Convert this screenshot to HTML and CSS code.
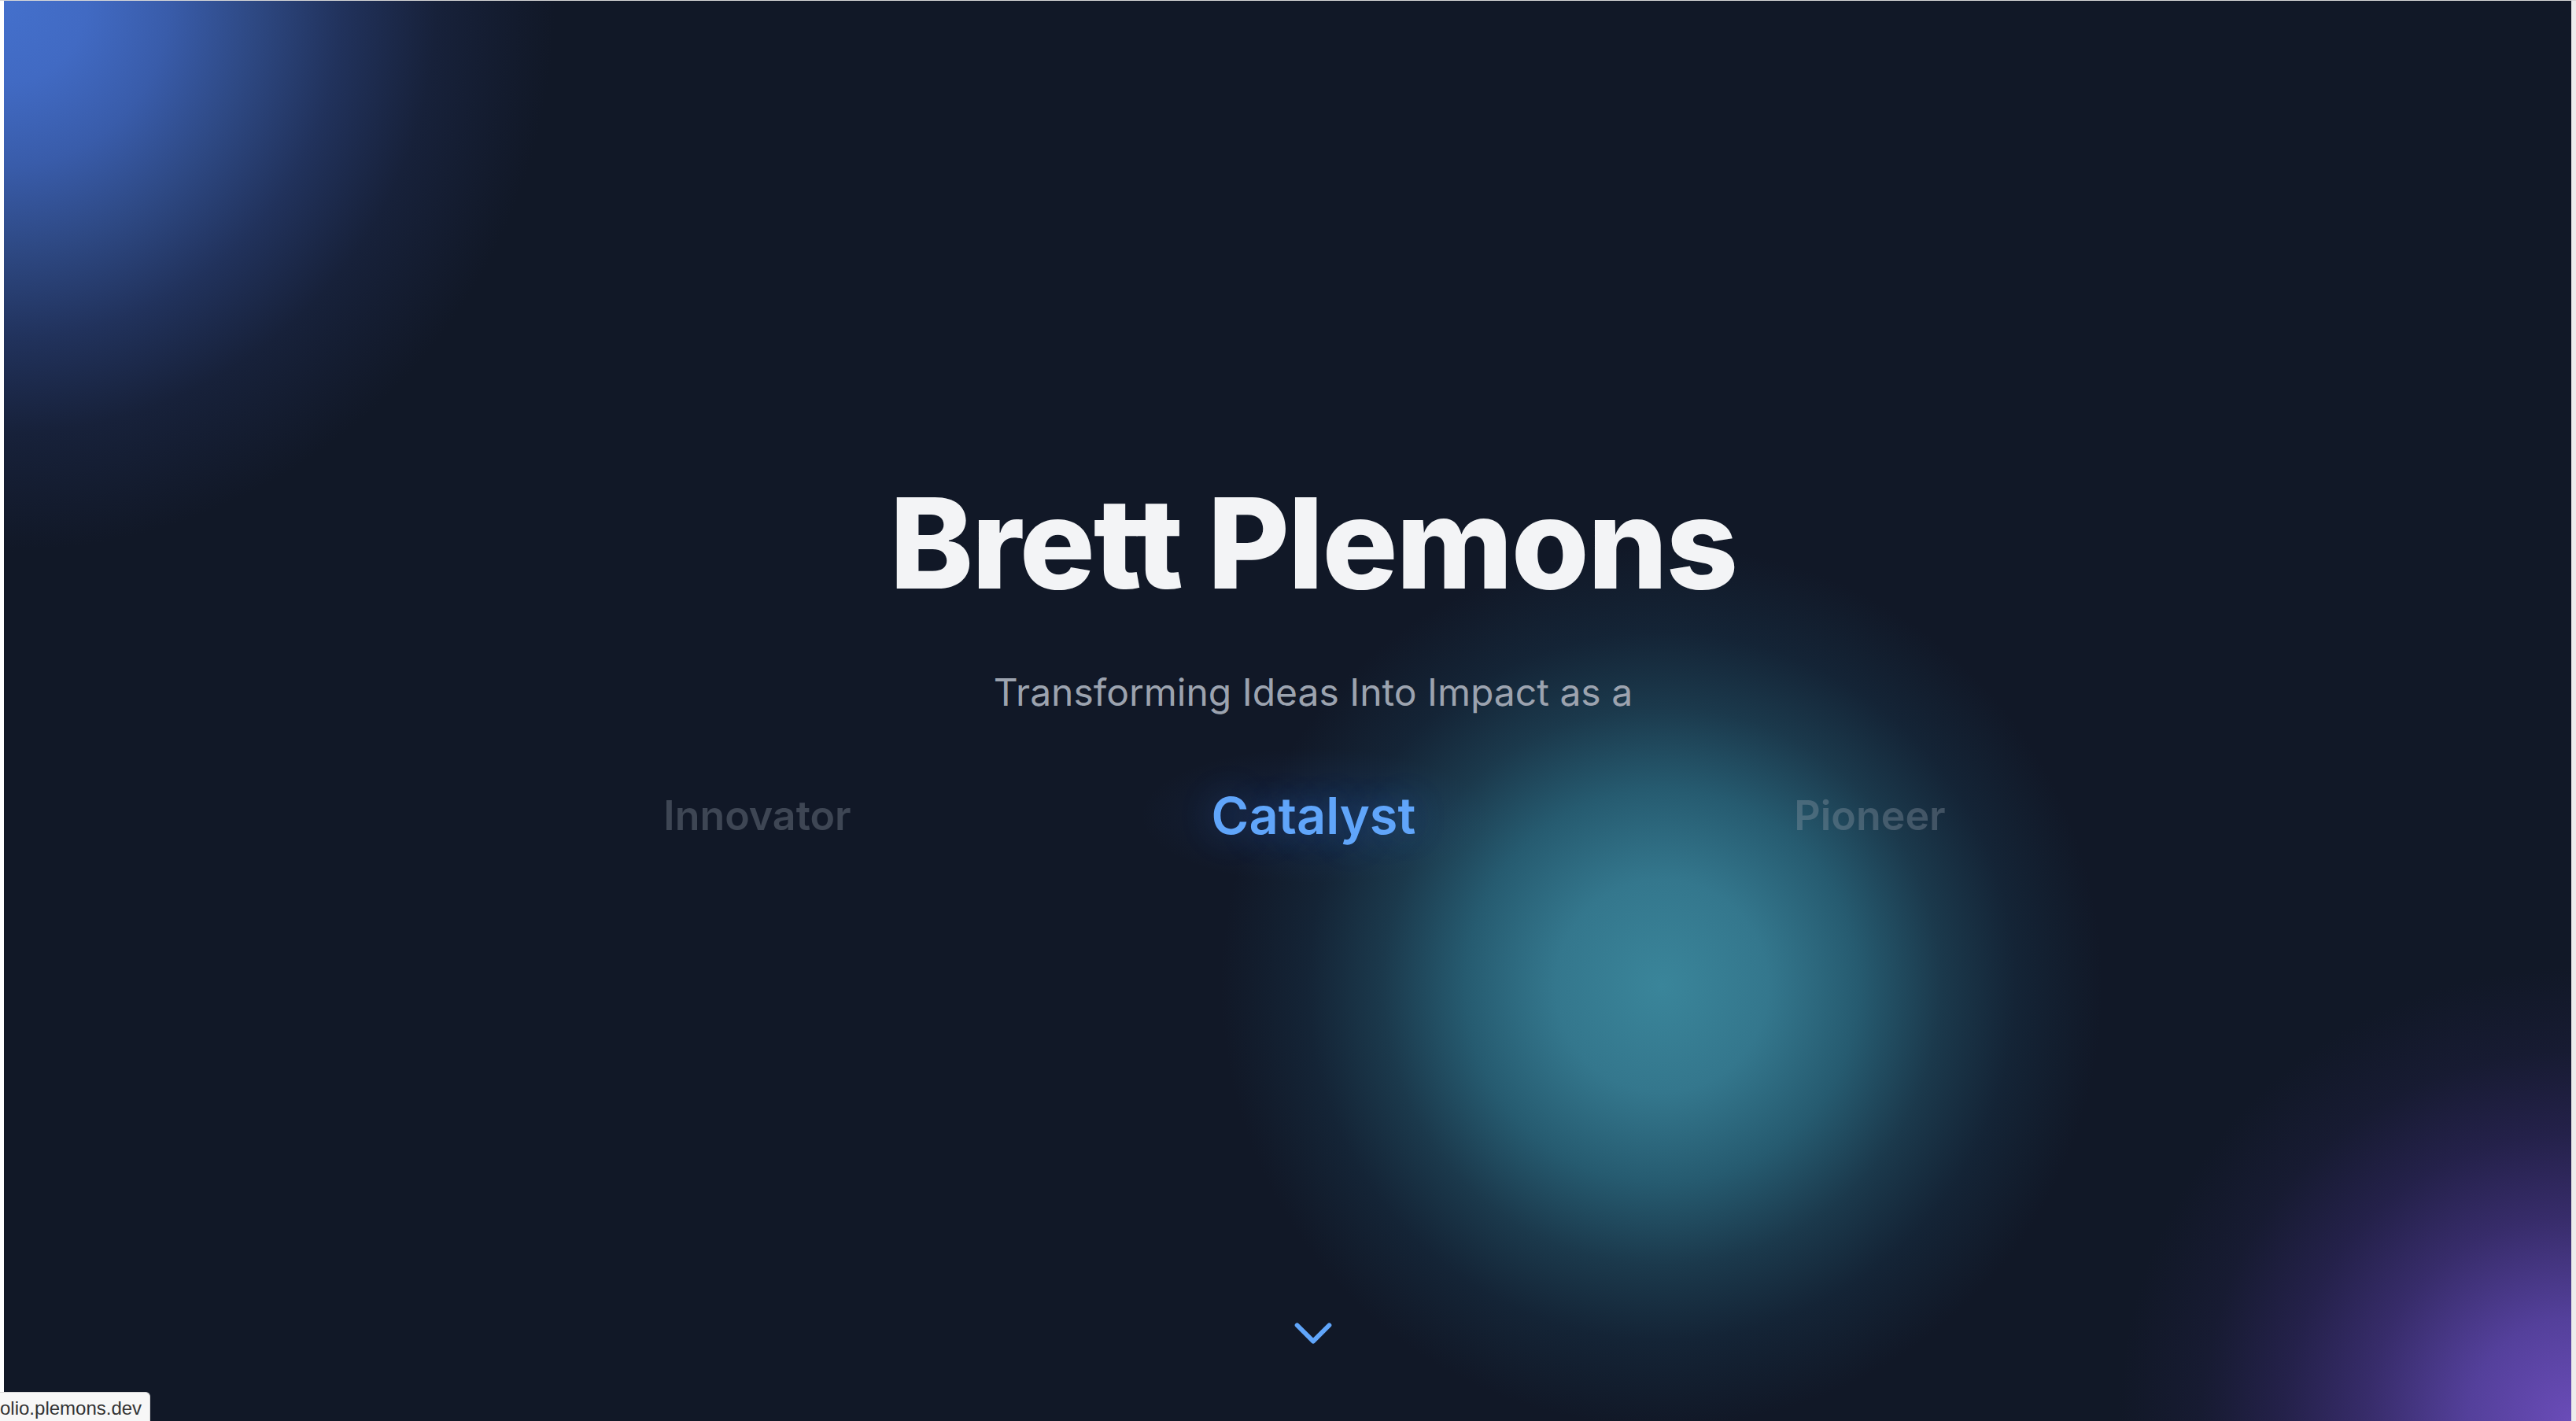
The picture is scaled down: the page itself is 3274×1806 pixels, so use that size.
FILE: index.html
```html
<!DOCTYPE html>
<html lang="en">
<head>
<meta charset="utf-8">
<title>Brett Plemons</title>
<link rel="stylesheet" href="styles.css">
</head>
<body>
<div class="frame">
  <section class="hero">
    <h1 class="hero-title">Brett Plemons</h1>
    <p class="hero-sub">Transforming Ideas Into Impact as a</p>
    <div class="roles">
      <span class="role role-side">Innovator</span>
      <span class="role role-active">Catalyst</span>
      <span class="role role-side">Pioneer</span>
    </div>
    <div class="scroll-cue">
      <svg class="chevron" viewBox="0 0 24 24" fill="none" stroke="currentColor" stroke-width="2" stroke-linecap="round" stroke-linejoin="round"><path d="M19 9l-7 7-7-7"/></svg>
    </div>
  </section>
</div>
<div class="status">olio.plemons.dev</div>
</body>
</html>
```
FILE: styles.css
```css
html, body {
  margin: 0;
  padding: 0;
  height: 100%;
  background: #ffffff;
  overflow: hidden;
}

.frame {
  height: 1806px;
  box-sizing: border-box;
  border-top: 1px solid #d8d8d8;
  padding-left: 5px;
  padding-right: 6px;
  background: linear-gradient(to right, #ffffff 0 5px, #ececec 5px);
}

.hero {
  height: 1805px;
  box-sizing: border-box;
  padding: 609px 0 78px 65px;
  display: flex;
  flex-direction: column;
  align-items: center;
  font-family: Inter, "Noto Sans", sans-serif;
  background-color: #111827;
  background-image:
    radial-gradient(circle 700px at 0 0,
      rgb(68,112,204) 0px,
      rgb(65,106,195) 105px,
      rgb(57,92,170) 210px,
      rgb(46,73,132) 315px,
      rgb(33,50,92) 430px,
      rgb(23,33,58) 550px,
      rgba(17,24,39,0) 700px),
    radial-gradient(circle 575px at 100% 100%,
      rgb(106,76,184) 0px,
      rgb(84,64,155) 130px,
      rgb(55,44,106) 260px,
      rgb(36,33,74) 365px,
      rgb(23,27,50) 470px,
      rgba(17,24,39,0) 575px),
    radial-gradient(circle 560px at 2107px 1252px,
      rgb(58,133,154) 0px,
      rgb(52,119,141) 135px,
      rgb(38,91,112) 250px,
      rgb(27,57,76) 355px,
      rgb(20,36,54) 450px,
      rgba(17,24,39,0) 560px);
  background-repeat: no-repeat;
}

.hero-title {
  margin: 0;
  font-size: 160px;
  line-height: 1;
  font-weight: 800;
  letter-spacing: -2px;
  color: #f3f4f6;
}

.hero-sub {
  margin: 86px 0 0;
  font-size: 48px;
  line-height: 1;
  font-weight: 400;
  color: #9ca3af;
}

.roles {
  margin-top: 103px;
  display: flex;
  justify-content: center;
}

.role {
  flex: 0 0 707px;
  text-align: center;
  font-size: 59px;
  line-height: 1;
  font-weight: 600;
}

.role-side {
  color: rgba(156, 163, 175, 0.33);
  transform: scale(0.88);
}

.role-active {
  position: relative;
  color: #60a5fa;
  transform: scale(1.1);
  text-shadow: 0 0 40px rgba(59, 130, 246, 0.3);
}

.role-active::before {
  content: "";
  position: absolute;
  left: 150px;
  right: 150px;
  top: -50px;
  bottom: -50px;
  border-radius: 80px;
  background: radial-gradient(ellipse at center, rgba(59,130,246,0.10), rgba(59,130,246,0) 70%);
  z-index: -1;
}

.scroll-cue {
  margin-top: auto;
  color: #60a5fa;
  line-height: 0;
}

.chevron {
  width: 70px;
  height: 70px;
}

.status {
  position: fixed;
  left: 0;
  bottom: 0;
  height: 37px;
  box-sizing: border-box;
  padding: 4px 10px 0 0;
  line-height: 31px;
  font-family: "Liberation Sans", Arial, sans-serif;
  font-size: 24px;
  color: #333333;
  background: #f7f7f7;
  border-top: 1px solid #d4d4d4;
  border-right: 1px solid #d4d4d4;
  border-top-right-radius: 6px;
}
```
